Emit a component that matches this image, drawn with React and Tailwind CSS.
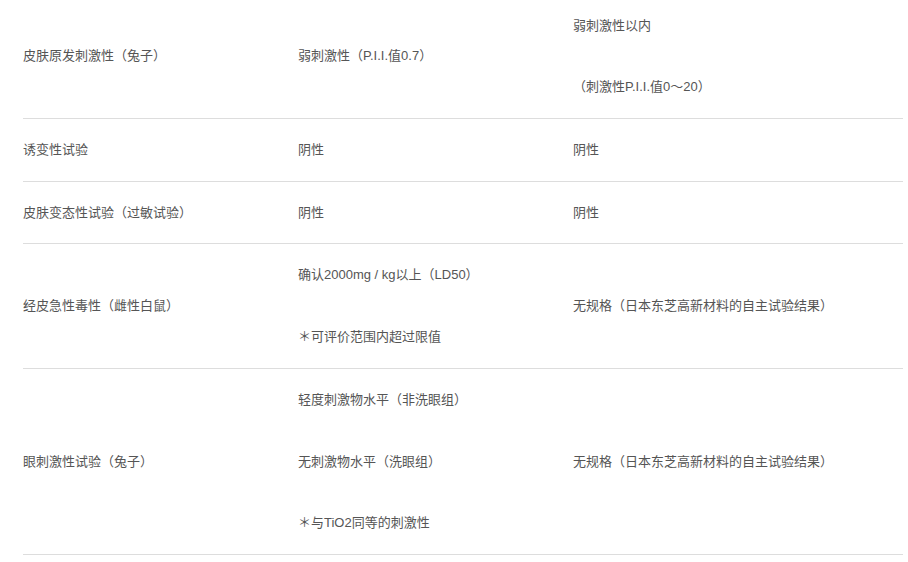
const rows = [
  {
    name: "皮肤原发刺激性（兔子）",
    result: ["弱刺激性（P.I.I.值0.7）"],
    standard: ["弱刺激性以内", "（刺激性P.I.I.值0～20）"],
  },
  { name: "诱变性试验", result: ["阴性"], standard: ["阴性"] },
  { name: "皮肤变态性试验（过敏试验）", result: ["阴性"], standard: ["阴性"] },
  {
    name: "经皮急性毒性（雌性白鼠）",
    result: ["确认2000mg / kg以上（LD50）", "＊可评价范围内超过限值"],
    standard: ["无规格（日本东芝高新材料的自主试验结果）"],
  },
  {
    name: "眼刺激性试验（兔子）",
    result: ["轻度刺激物水平（非洗眼组）", "无刺激物水平（洗眼组）", "＊与TiO2同等的刺激性"],
    standard: ["无规格（日本东芝高新材料的自主试验结果）"],
  },
];

const Cell = ({ lines }) => (
  <div className="flex flex-col justify-center">
    {lines.map((t, i) => (
      <p key={i} className="py-5 leading-[21.7px] whitespace-nowrap">
        {t}
      </p>
    ))}
  </div>
);

export default function App() {
  return (
    <div
      className="bg-white min-h-screen pl-[23px] text-[13px] text-[#555]"
      style={{ fontFamily: '"Liberation Sans", "Noto Sans CJK SC", sans-serif' }}
    >
      {/* Safety data table, top row is cut by scroll */}
      <div className="w-[880px] -mt-[5.4px]">
        {rows.map((row, i) => (
          <div
            key={i}
            className="grid grid-cols-[275px_275px_330px] border-b border-[#dddddd]"
          >
            <Cell lines={[row.name]} />
            <Cell lines={row.result} />
            <Cell lines={row.standard} />
          </div>
        ))}
      </div>
    </div>
  );
}
